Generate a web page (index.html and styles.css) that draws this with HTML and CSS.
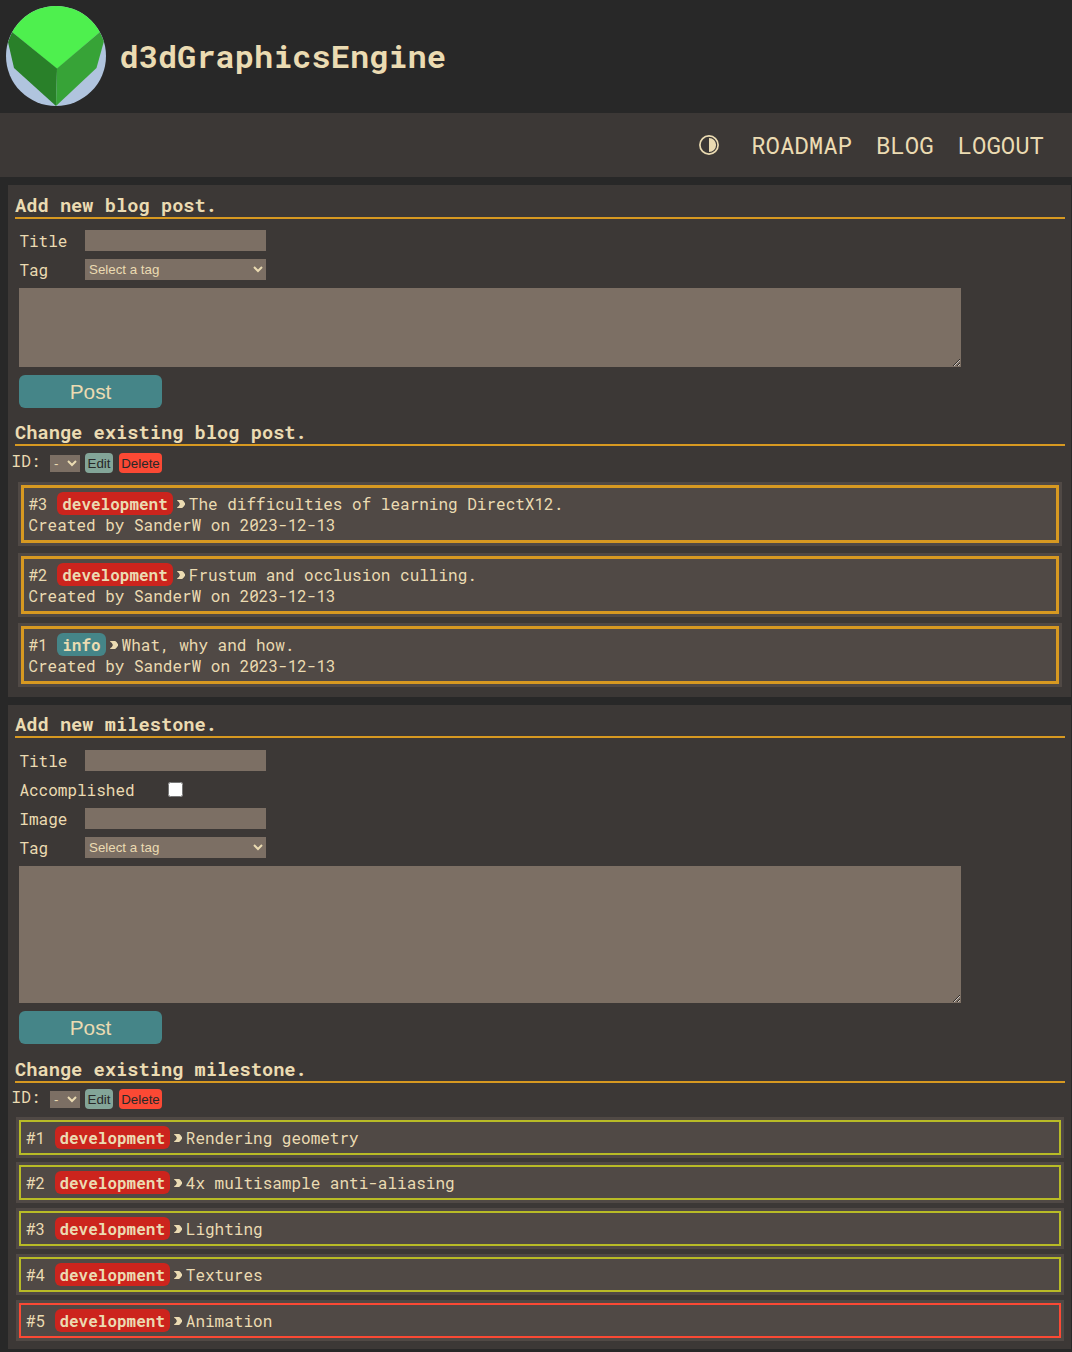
FILE: index.html
```
<!DOCTYPE html>
<html lang="en">
<head>
<meta charset="utf-8">
<title>d3dGraphicsEngine</title>
<link rel="stylesheet" href="styles.css">
</head>
<body>
<svg class="defs" width="0" height="0"><symbol id="chev" viewBox="0 0 8 8"><path d="M0 0H5Q7 1.300 8.200 4Q7 6.700 5 8H0V7.200Q2 6.500 2.700 4Q2 1.500 0 .8Z" fill="currentColor"/></symbol></svg>
<header class="header">
  <svg class="logo" viewBox="0 0 100 100">
    <clipPath id="disc"><circle cx="50" cy="50" r="50"/></clipPath>
    <g clip-path="url(#disc)">
      <rect width="100" height="100" fill="#b0c4de"/>
      <path d="M0 0H100V20L94 26L51 63L6 26L0 20Z" fill="#4ef04e"/>
      <path d="M6 26L51 62.500L50 100L8 62L2 36Z" fill="#298029"/>
      <path d="M94 26L51 62.500L50 100L90.500 62L98 35Z" fill="#37a337"/>
    </g>
  </svg>
  <h1>d3dGraphicsEngine</h1>
</header>
<nav class="nav">
  <svg class="theme" viewBox="0 0 20 20"><circle cx="10" cy="10" r="9.100" fill="none" stroke="currentColor" stroke-width="1.700"/><path d="M10 2.900A7.100 7.100 0 0 1 10 17.100Z" fill="currentColor"/></svg>
  <a>ROADMAP</a><a>BLOG</a><a>LOGOUT</a>
</nav>
<main>
  <section class="panel blog">
    <h3>Add new blog post.</h3>
    <form class="form">
      <div class="row"><label>Title</label><input class="field" type="text"></div>
      <div class="row"><label>Tag</label><select class="field"><option>Select a tag</option></select></div>
      <textarea class="body"></textarea>
      <button class="post" type="button">Post</button>
    </form>
    <h3>Change existing blog post.</h3>
    <div class="manage"><span>ID:</span><select><option>-</option></select><button class="edit">Edit</button><button class="delete">Delete</button></div>
    <div class="list">
      <div class="item"><div class="card"><div class="line">#3 <b class="tag dev">development</b><svg class="chev"><use href="#chev"/></svg>The difficulties of learning DirectX12.</div><div class="line">Created by SanderW on 2023-12-13</div></div></div>
      <div class="item"><div class="card"><div class="line">#2 <b class="tag dev">development</b><svg class="chev"><use href="#chev"/></svg>Frustum and occlusion culling.</div><div class="line">Created by SanderW on 2023-12-13</div></div></div>
      <div class="item"><div class="card"><div class="line">#1 <b class="tag info">info</b><svg class="chev"><use href="#chev"/></svg>What, why and how.</div><div class="line">Created by SanderW on 2023-12-13</div></div></div>
    </div>
  </section>
  <section class="panel milestones">
    <h3>Add new milestone.</h3>
    <form class="form">
      <div class="row"><label>Title</label><input class="field" type="text"></div>
      <div class="row"><label class="wide">Accomplished</label><input class="check" type="checkbox"></div>
      <div class="row"><label>Image</label><input class="field" type="text"></div>
      <div class="row"><label>Tag</label><select class="field"><option>Select a tag</option></select></div>
      <textarea class="body tall"></textarea>
      <button class="post" type="button">Post</button>
    </form>
    <h3>Change existing milestone.</h3>
    <div class="manage"><span>ID:</span><select><option>-</option></select><button class="edit">Edit</button><button class="delete">Delete</button></div>
    <div class="list">
      <div class="item"><div class="card"><div class="line">#1 <b class="tag dev">development</b><svg class="chev"><use href="#chev"/></svg>Rendering geometry</div></div></div>
      <div class="item"><div class="card"><div class="line">#2 <b class="tag dev">development</b><svg class="chev"><use href="#chev"/></svg>4x multisample anti-aliasing</div></div></div>
      <div class="item"><div class="card"><div class="line">#3 <b class="tag dev">development</b><svg class="chev"><use href="#chev"/></svg>Lighting</div></div></div>
      <div class="item"><div class="card"><div class="line">#4 <b class="tag dev">development</b><svg class="chev"><use href="#chev"/></svg>Textures</div></div></div>
      <div class="item"><div class="card open"><div class="line">#5 <b class="tag dev">development</b><svg class="chev"><use href="#chev"/></svg>Animation</div></div></div>
    </div>
  </section>
</main>
</body>
</html>
```
FILE: styles.css
```
* { box-sizing: border-box; }
body {
  margin: 0;
  background: #282828;
  color: #ebdbb2;
  font: 16px/21px "Roboto Mono", "DejaVu Sans Mono", monospace;
}
.defs { display: block; }
.header { display: flex; align-items: center; height: 113px; padding: 0 6px 1px; gap: 13.5px; }
.logo { width: 100px; height: 100px; }
h1 { margin: 0; font-size: 32px; line-height: 42px; }
.nav {
  display: flex; align-items: center; justify-content: flex-end; gap: 24px;
  height: 64px; padding: 0 28px 1px 0; background: #3c3836;
  font-size: 24px; line-height: 32px;
}
.theme { width: 20px; height: 20px; margin-right: 8.5px; }
main { display: flex; flex-direction: column; gap: 8px; padding: 8px 1px 0 8px; }
.panel { padding: 7px 6px 0 7px; background: #3c3836; }
.blog { height: 512px; }
.milestones { height: 644px; }
h3 {
  margin: 0; height: 27px;
  border-bottom: 2px solid #d79921;
  font-size: 18.72px; line-height: 25px;
}
.milestones h3 { height: 26px; line-height: 23px; }
.form { display: flex; flex-direction: column; align-items: flex-start; gap: 8px; padding: 11px 0 0 4px; margin-bottom: 11px; }
.milestones .form { padding-top: 12px; margin-bottom: 13px; }
.row { display: flex; height: 21px; align-items: center; }
.row label { width: 66px; padding-left: .4px; }
.row .wide { width: 149px; }
.field, .manage select {
  width: 181px; height: 21px; margin: 0; border: 0; border-radius: 0;
  background: #7c6f64; color: #ebdbb2;
  font: 13.333px "Liberation Sans", Arial, sans-serif;
}
.check { width: 15px; height: 15px; margin: -1px 0 0; }
.body { width: 942px; height: 79px; margin: 0; border: 0; background: #7c6f64; color: #ebdbb2; }
.tall { height: 137px; }
button { border: 0; padding: 0; font-family: "Liberation Sans", Arial, sans-serif; }
.post { width: 143px; height: 33px; border-radius: 6px; background: #458588; color: #ebdbb2; font-size: 20.8px; }
.manage { display: flex; align-items: center; height: 20px; margin: 7px 0 9px -3.4px; }
.milestones .manage { margin: 6px 0 7.6px -3.4px; }
.manage span { width: 38.4px; margin-top: -6px; }
.manage select { width: 30px; height: 17px; margin-right: 5px; margin-top: 1px; }
.edit, .delete { height: 20px; border-radius: 4px; font-size: 13.333px; color: #282828; }
.edit { width: 28px; margin-right: 6px; background: #83a598; }
.delete { width: 43px; background: #fb4934; }
.list { display: flex; flex-direction: column; gap: 6.5px; margin: 0 3px; }
.milestones .list { gap: 4.75px; margin: 0 1px; }
.item { padding: 3px; background: #504945; }
.card { height: 58px; padding: 5px 4.4px; border: 3px solid #d79921; }
.milestones .card { height: 35px; padding: 5px; border: 2px solid #b8bb26; }
.milestones .open { border-color: #fb4934; }
.line { height: 21px; white-space: pre; }
.tag { padding: 1px 5px; border-radius: 6px; }
.milestones .tag { padding-left: 4.6px; padding-right: 4.800px; }
.dev { background: #cc241d; }
.info { background: #458588; }
.chev { width: 8.400px; height: 8px; margin: 0 3.600px 2px 4px; }
```
